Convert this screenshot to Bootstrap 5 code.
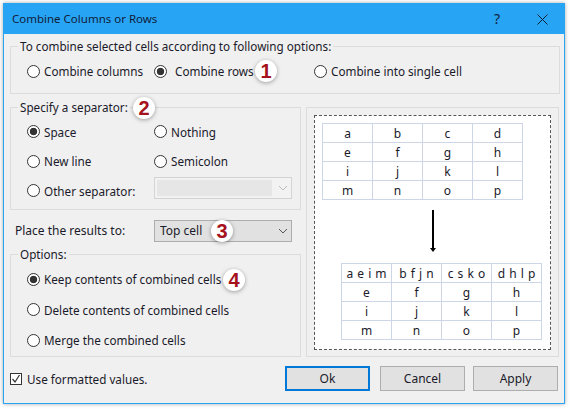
<!DOCTYPE html>
<html lang="en"><head><meta charset="utf-8"><title>Combine Columns or Rows</title>
<link href="https://cdn.jsdelivr.net/npm/bootstrap@5.3.0/dist/css/bootstrap.min.css" rel="stylesheet">
<style>
html,body{height:100%;background:#fff;overflow:hidden}
body{font:11.7px/16px "Noto Sans","Liberation Sans",sans-serif;color:#1a1a2a}
.dlg{position:relative;width:562px;height:401px;margin:3px 0 0 3px;background:#f0f0f0;border:1px solid #27a4f3;box-shadow:0 0 4px rgba(0,0,0,.35)}
.tbar{height:30px;background:#27a4f3;color:#10203a;padding:0 8px;font-size:11.5px}
.tbar svg{display:block}
.help{width:12px;text-align:center;font-size:14px;margin-right:34px}
.closex{margin-right:8px}
.bdy{padding:4px 4px 0 6px}
.grp{border:1px solid #dcdcdc;margin:0;padding:2px 0 0;min-width:0}
.grp>legend{float:none;width:auto;font-size:inherit;line-height:16px;margin:0 0 0 7px;padding:0 2px}
.g1{height:56px;margin-bottom:5px}
.g2{width:291px;height:111px}
.g3{width:291px;height:111px}
.g3 .rw+.rw{margin-top:.5px}
.g4{width:253px;height:250px;margin:8px 0 0 5px;padding:7px 7px 0}
.rw{display:flex;align-items:center;height:30px;padding-left:16px}
.g2 .rw{height:29.5px}
.form-check-input.rad{width:13px;height:13px;margin:0 4px 0 0;flex:none;float:none;background:#fff;border:1px solid #333;border-radius:50%;box-shadow:none}
.form-check-input.rad:checked{background:radial-gradient(circle,#333 0 3.4px,#fff 4.1px)}
.opt{display:flex;align-items:center;margin:0;white-space:nowrap}
.c1{width:127px}.c2{width:160px}
.wsel{width:138px;height:22px;padding:0 0 0 5px;border-radius:0;font-size:12px;line-height:16px;color:inherit;box-shadow:none;
 background:url("data:image/svg+xml,%3Csvg xmlns='http://www.w3.org/2000/svg' width='10' height='6'%3E%3Cpath d='M1 1l4 4 4-4' fill='none' stroke='%23555'/%3E%3C/svg%3E") no-repeat right 3px center,#e1e1e1;border:1px solid #adadad}
.wsel:disabled{margin-bottom:6px;border-color:#d4d4d4;background:url("data:image/svg+xml,%3Csvg xmlns='http://www.w3.org/2000/svg' width='10' height='6'%3E%3Cpath d='M1 1l4 4 4-4' fill='none' stroke='%23bbb'/%3E%3C/svg%3E") no-repeat right 3px center,linear-gradient(#e6e6e6,#e6e6e6) no-repeat 2px 2px/115px 16px,#f2f2f2}
.prow{height:36px;padding:6px 0 0 5px}
.plab{width:139px;font-size:12px}
.dash{height:235px;background:#fff;border:1px dashed #555;padding:7px}
.tbl{border-collapse:collapse;width:201px;table-layout:fixed;font-size:12px;margin:0}
.tbl td{border:1px solid #cdd6e6;height:19px;padding:0;text-align:center;line-height:17px}
.t2{margin-left:19px}
.spaced td{word-spacing:1px}
.arrow{display:block;margin:10px 0 11px 107px}
.ftr{padding:9px 6px 0 6px;height:34px}
.chk{width:12px;height:12px;flex:none;margin:1px 5px 0 0;background:#fff;border:1px solid #333;display:flex}
.wbtn{width:85px;height:25px;padding:0;font-size:12px;line-height:16px;color:inherit;background:#e1e1e1;border:1px solid #adadad;border-radius:0}
.wbtn.dft{border:2px solid #0078d7}
.gap10{margin-left:10px}
.pin{position:absolute;width:22px;height:22px;border-radius:50%;background:#fff;box-shadow:0 1px 4px rgba(0,0,0,.35);color:#a5121c;font:700 20px/22px "Liberation Sans",sans-serif;text-align:center}
.p1{left:251px;top:56px}.p2{left:129px;top:93px}.p3{left:207px;top:216px}.p4{left:219px;top:265px}
</style></head>
<body>
<div class="dlg">
  <div class="tbar d-flex align-items-center">
    <span class="flex-grow-1">Combine Columns or Rows</span>
    <span class="help">?</span>
    <svg class="closex" width="11" height="11" viewBox="0 0 11 11"><path d="M.5.5l10 10M10.5.5l-10 10" stroke="#10203a" fill="none"/></svg>
  </div>
  <div class="bdy">
    <fieldset class="grp g1"><legend>To combine selected cells according to following options:</legend>
      <div class="rw">
        <label class="opt c1"><input class="form-check-input rad" type="radio" name="a">Combine columns</label>
        <label class="opt c2"><input class="form-check-input rad" type="radio" name="a" checked><span class="ms-1">Combine rows</span></label>
        <label class="opt"><input class="form-check-input rad" type="radio" name="a">Combine into single cell</label>
      </div>
    </fieldset>
    <div class="d-flex">
      <div>
        <fieldset class="grp g2"><legend>Specify a separator:</legend>
          <div class="rw"><label class="opt c1"><input class="form-check-input rad" type="radio" name="b" checked>Space</label><label class="opt"><input class="form-check-input rad" type="radio" name="b">Nothing</label></div>
          <div class="rw"><label class="opt c1"><input class="form-check-input rad" type="radio" name="b">New line</label><label class="opt"><input class="form-check-input rad" type="radio" name="b">Semicolon</label></div>
          <div class="rw"><label class="opt c1"><input class="form-check-input rad" type="radio" name="b">Other separator:</label><select class="form-select wsel" disabled aria-label="Other separator"></select></div>
        </fieldset>
        <div class="prow d-flex align-items-center"><span class="plab">Place the results to:</span><select class="form-select wsel" aria-label="Place the results to"><option>Top cell</option></select></div>
        <fieldset class="grp g3"><legend>Options:</legend>
          <div class="rw"><label class="opt"><input class="form-check-input rad" type="radio" name="c" checked>Keep contents of combined cells</label></div>
          <div class="rw"><label class="opt"><input class="form-check-input rad" type="radio" name="c">Delete contents of combined cells</label></div>
          <div class="rw"><label class="opt"><input class="form-check-input rad" type="radio" name="c">Merge the combined cells</label></div>
        </fieldset>
      </div>
      <div class="grp g4">
        <div class="dash">
          <table class="tbl"><tbody>
            <tr><td>a</td><td>b</td><td>c</td><td>d</td></tr>
            <tr><td>e</td><td>f</td><td>g</td><td>h</td></tr>
            <tr><td>i</td><td>j</td><td>k</td><td>l</td></tr>
            <tr><td>m</td><td>n</td><td>o</td><td>p</td></tr>
          </tbody></table>
          <svg class="arrow" width="8" height="42" viewBox="0 0 8 42"><path d="M4 0v39" stroke="#000" stroke-width="2"/><path d="M1 38h6l-3 4z" fill="#000"/></svg>
          <table class="tbl t2"><tbody>
            <tr class="spaced"><td>a e i m</td><td>b f j n</td><td>c s k o</td><td>d h l p</td></tr>
            <tr><td>e</td><td>f</td><td>g</td><td>h</td></tr>
            <tr><td>i</td><td>j</td><td>k</td><td>l</td></tr>
            <tr><td>m</td><td>n</td><td>o</td><td>p</td></tr>
          </tbody></table>
        </div>
      </div>
    </div>
  </div>
  <div class="ftr d-flex align-items-center">
    <span class="chk"><svg width="10" height="10" viewBox="0 0 10 10"><path d="M1.5 5l2.5 3 4.5-7" fill="none" stroke="#333" stroke-width="1.2"/></svg></span>
    <span class="flex-grow-1">Use formatted values.</span>
    <button class="wbtn dft" type="button">Ok</button>
    <button class="wbtn gap10" type="button">Cancel</button>
    <button class="wbtn ms-2" type="button">Apply</button>
  </div>
  <span class="pin p1">1</span><span class="pin p2">2</span><span class="pin p3">3</span><span class="pin p4">4</span>
</div>
<script src="https://cdn.jsdelivr.net/npm/bootstrap@5.3.0/dist/js/bootstrap.bundle.min.js"></script>
</body></html>
